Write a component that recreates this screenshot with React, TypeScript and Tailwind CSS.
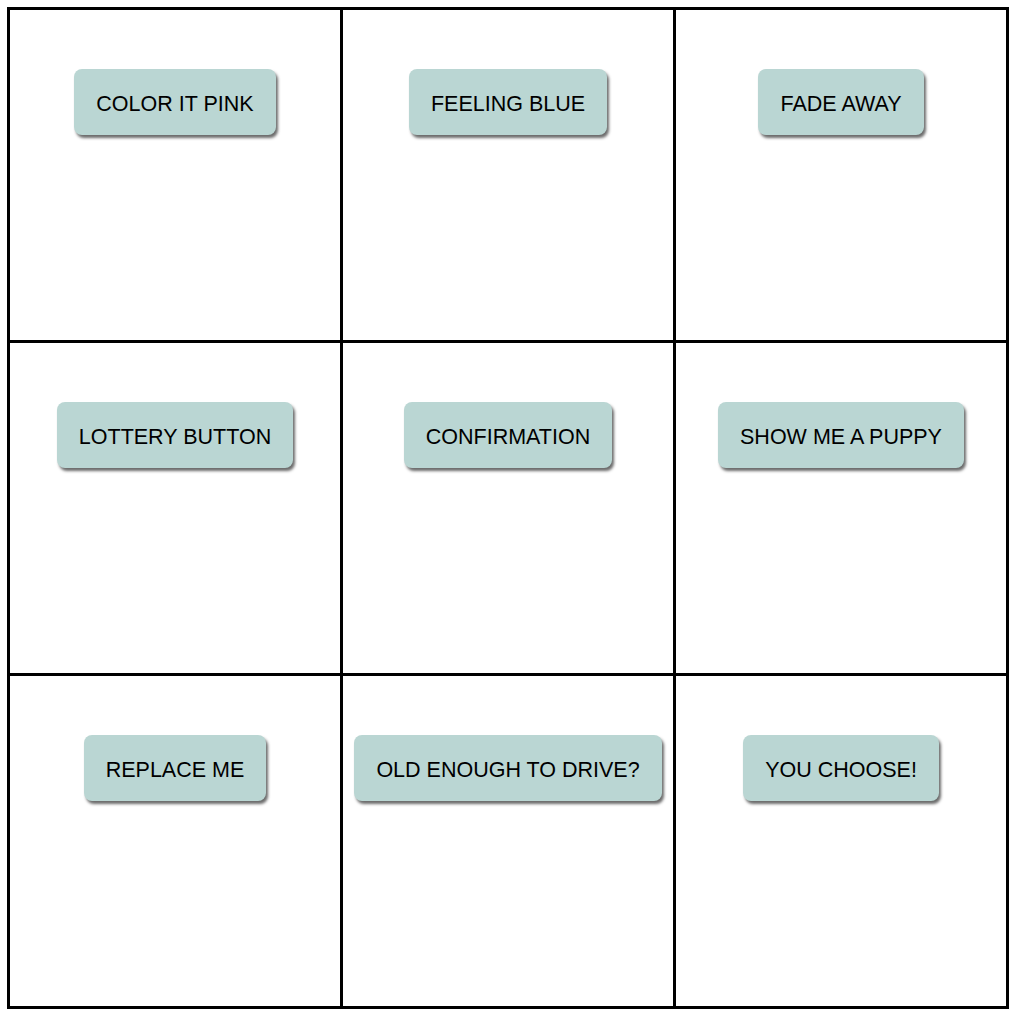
const buttons = [
  'COLOR IT PINK',
  'FEELING BLUE',
  'FADE AWAY',
  'LOTTERY BUTTON',
  'CONFIRMATION',
  'SHOW ME A PUPPY',
  'REPLACE ME',
  'OLD ENOUGH TO DRIVE?',
  'YOU CHOOSE!',
];

export default function App() {
  return (
    <div className="min-h-screen bg-white p-[7px]" style={{ fontFamily: '"Liberation Sans", Arial, sans-serif' }}>
      <div className="grid w-[1002px] grid-cols-3 gap-[3px] bg-black p-[3px]">
        {buttons.map((label) => (
          <div key={label} className="flex h-[330px] justify-center bg-white pt-[59px]">
            <button className="h-[66px] rounded-[8px] bg-[#bad6d3] px-[22px] pt-[5px] text-[21.5px] text-black shadow-[2px_3px_3px_#6b6b6b]">
              {label}
            </button>
          </div>
        ))}
      </div>
    </div>
  );
}
